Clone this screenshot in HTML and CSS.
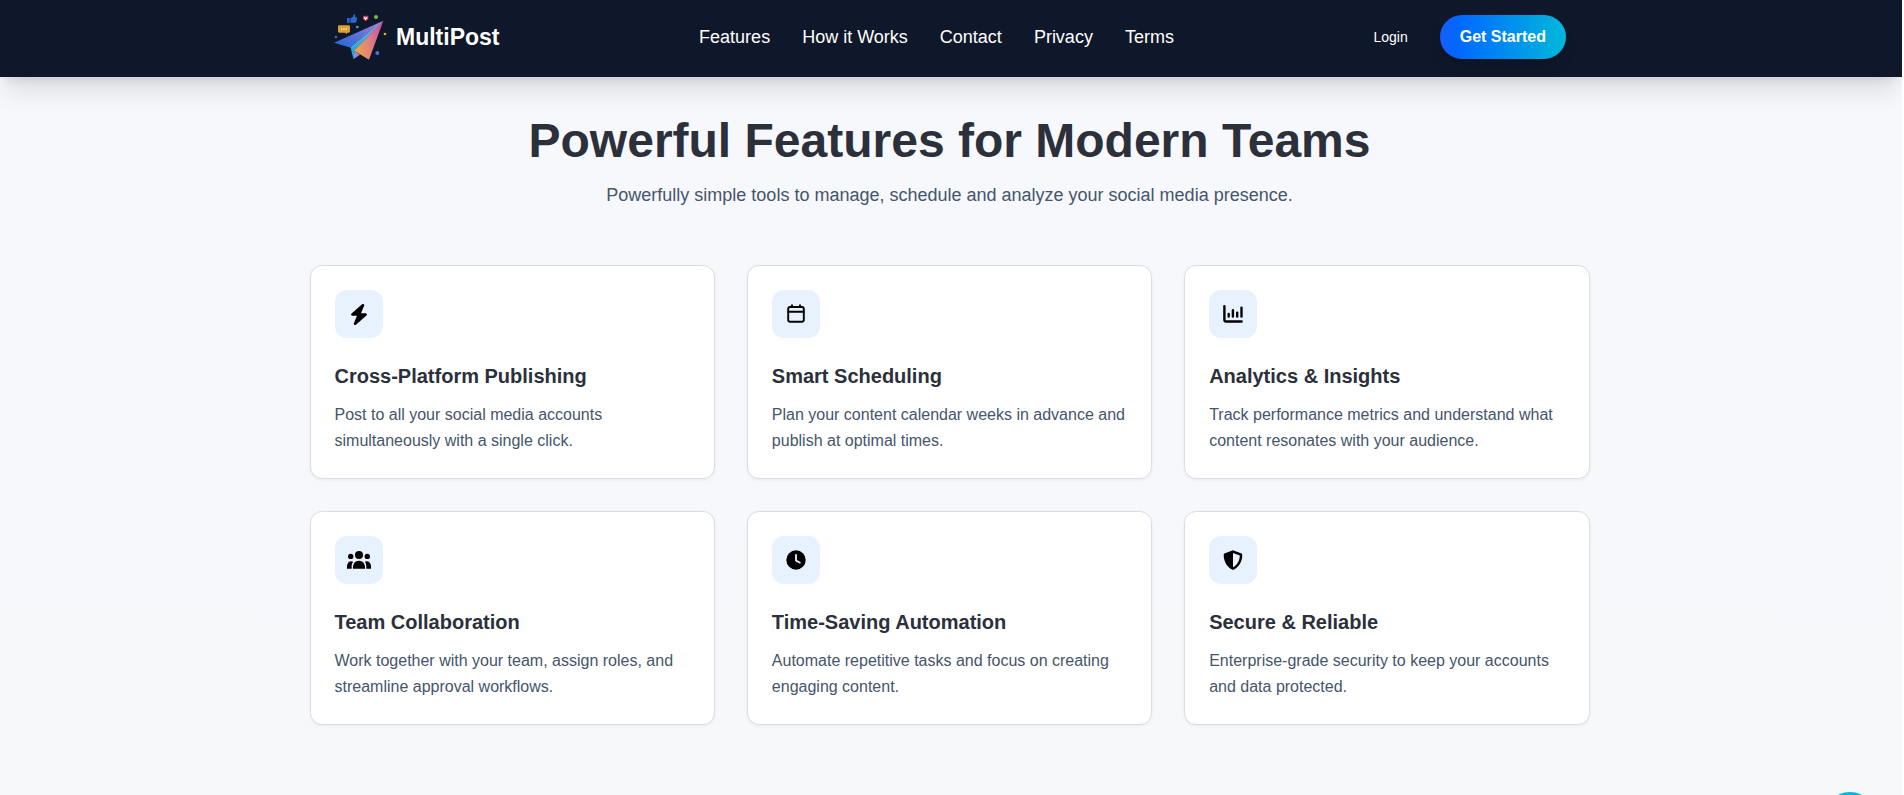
FILE: index.html
```html
<!doctype html>
<html lang="en">
<head>
<meta charset="utf-8">
<meta name="viewport" content="width=device-width, initial-scale=1">
<title>MultiPost</title>
<link rel="stylesheet" href="styles.css">
</head>
<body>

<header class="header">
	<div class="header-inner">
		<a class="brand" href="#">
			<svg class="logo" viewBox="45 36 162 150" aria-hidden="true">
				<defs>
					<linearGradient id="wing" x1="0" y1="1" x2="1" y2="0">
						<stop offset="0" stop-color="#2563d9"/>
						<stop offset=".5" stop-color="#5b74d6"/>
						<stop offset="1" stop-color="#b57fd0"/>
					</linearGradient>
					<linearGradient id="fold" x1="0" y1="1" x2="1" y2="0">
						<stop offset="0" stop-color="#1ea0cf"/>
						<stop offset=".5" stop-color="#3fb0d8"/>
						<stop offset="1" stop-color="#a87fd6"/>
					</linearGradient>
					<linearGradient id="side" x1="0" y1=".6" x2="1" y2=".4">
						<stop offset="0" stop-color="#f2a541"/>
						<stop offset=".5" stop-color="#e0807f"/>
						<stop offset="1" stop-color="#c94fa8"/>
					</linearGradient>
				</defs>
				<path fill="#9a86d8" d="M106 152L103 178L123 164Z"/>
				<path fill="url(#fold)" d="M193 62L95 143L103 178L107 153Z"/>
				<path fill="url(#wing)" d="M45 128L193 62L95 143Z"/>
				<path stroke="#7fd0ea" stroke-width="2" d="M97 143L186 69"/>
				<path fill="url(#side)" d="M193 62L150 179L106 152Z"/>
				<path fill="#2f66cf" d="M84 54h8v14h-8zM94 55l7-4 4-9q5 1 3 10h5q2 1 1 5l-2 9q-1 2-4 2H94z"/>
				<path fill="#d8375f" d="M135 47h10q3 0 3 3v5q0 4-8 9q-8-5-8-9v-5q0-3 3-3z"/>
				<path fill="#fff" d="M140 60l-5-5q-1-4 2-4l3 2 3-2q3 0 2 4z"/>
				<path fill="#dba032" d="M60 76h29q4 0 4 4v14q0 4-4 4h-5v5l-6-5H61q-4 0-4-4V80q0-4 3-4z"/>
				<g fill="#fff">
					<circle cx="68" cy="87" r="2"/><circle cx="75" cy="87" r="2"/><circle cx="82" cy="87" r="2"/>
				</g>
				<circle fill="#6fbf4b" cx="171" cy="51" r="6"/>
				<circle fill="#2cb1c4" cx="115" cy="81" r="4"/>
				<circle fill="#4a62c8" cx="51" cy="111" r="4"/>
				<circle fill="#e0b030" cx="198" cy="102" r="4"/>
				<circle fill="#4a6fd8" cx="175" cy="159" r="6"/>
			</svg>
			<span>MultiPost</span>
		</a>
		<nav class="nav">
			<a href="#features">Features</a>
			<a href="#how">How it Works</a>
			<a href="#contact">Contact</a>
			<a href="#privacy">Privacy</a>
			<a href="#terms">Terms</a>
		</nav>
		<div class="actions">
			<a class="login" href="#login">Login</a>
			<button class="btn-start" type="button">Get Started</button>
		</div>
	</div>
</header>

<main class="features" id="features">
	<div class="heading">
		<h1>Powerful Features for Modern Teams</h1>
		<p>Powerfully simple tools to manage, schedule and analyze your social media presence.</p>
	</div>

	<div class="grid">
		<div class="card">
			<div class="icon">
				<svg class="bolt" viewBox="0 0 448 512" aria-hidden="true"><path d="M349.4 44.6c5.9-13.7 1.5-29.7-10.6-38.5s-28.6-8-39.9 1.8l-256 224c-10 8.8-13.6 22.9-8.9 35.3S50.7 288 64 288H175.5L98.6 467.4c-5.9 13.7-1.5 29.7 10.6 38.5s28.6 8 39.9-1.8l256-224c10-8.8 13.6-22.9 8.9-35.3s-16.6-20.7-30-20.7H272.5L349.4 44.6z"/></svg>
			</div>
			<h2>Cross-Platform Publishing</h2>
			<p>Post to all your social media accounts simultaneously with a single click.</p>
		</div>

		<div class="card">
			<div class="icon">
				<svg class="line" viewBox="0 0 24 24" stroke-width="1.9" aria-hidden="true"><rect x="4.2" y="5" width="15.6" height="14.8" rx="2"/><path d="M4.2 9.7h15.6M8 3.2V5M16 3.2V5"/></svg>
			</div>
			<h2>Smart Scheduling</h2>
			<p>Plan your content calendar weeks in advance and publish at optimal times.</p>
		</div>

		<div class="card">
			<div class="icon">
				<svg class="line" viewBox="0 0 24 24" stroke-width="2.4" aria-hidden="true"><path d="M3.4 4.1v14.2q0 1.2 1.2 1.2h16M7.7 12v2.6M11.9 8.3v6.3M16.2 10.6v4M20.5 5.6v9"/></svg>
			</div>
			<h2>Analytics &amp; Insights</h2>
			<p>Track performance metrics and understand what content resonates with your audience.</p>
		</div>

		<div class="card">
			<div class="icon">
				<svg viewBox="0 0 24 24" aria-hidden="true"><circle cx="12" cy="7" r="4"/><circle cx="3.7" cy="8.4" r="2.7"/><circle cx="20.3" cy="8.4" r="2.7"/><path d="M6 20.8v-1.6c0-3.6 2.4-6.4 6-6.4s6 2.8 6 6.4v1.6zM0 20.8v-2.6c0-2.8 1.8-4.9 4.4-4.9q1 0 1.8.4c-1.4 1.6-1.7 3.6-1.5 7.1zM24 20.8v-2.6c0-2.8-1.8-4.9-4.4-4.9q-1 0-1.8.4c1.4 1.6 1.7 3.6 1.5 7.1z"/></svg>
			</div>
			<h2>Team Collaboration</h2>
			<p>Work together with your team, assign roles, and streamline approval workflows.</p>
		</div>

		<div class="card">
			<div class="icon">
				<svg viewBox="0 0 24 24" aria-hidden="true"><circle cx="12" cy="12" r="9.7"/><path class="hands" d="M12 6.2v6.2l4.5 2.7"/></svg>
			</div>
			<h2>Time-Saving Automation</h2>
			<p>Automate repetitive tasks and focus on creating engaging content.</p>
		</div>

		<div class="card">
			<div class="icon">
				<svg viewBox="0 0 24 24" aria-hidden="true"><path fill-rule="evenodd" d="M12 2.2L20 5.2C20.9 5.6 21.3 6.2 21.3 7C21.2 13.5 18 19 13 21.5Q12 22 11 21.5C6 19 2.8 13.5 2.7 7C2.7 6.2 3.1 5.6 4 5.2ZM12 4.9V19.3C16.2 17 18.7 12.8 18.8 7.4Z"/></svg>
			</div>
			<h2>Secure &amp; Reliable</h2>
			<p>Enterprise-grade security to keep your accounts and data protected.</p>
		</div>
	</div>
</main>

<button class="fab" type="button" aria-label="Scroll to top"></button>

</body>
</html>
```
FILE: styles.css
```css
* {box-sizing:border-box; margin:0; padding:0; }
html {height:100%; background-color:#fff; }
body {min-height:100%; margin-right:2px; background-image:linear-gradient(#f7f8fd,#f6f8fa); font-family:"Liberation Sans",Arial,sans-serif; overflow:hidden; }
a {color:inherit; text-decoration:none; }

/* header */
.header {position:relative; padding-right:2px; background-color:#0f172a; color:#fff; box-shadow:0 20px 25px -5px rgba(0,0,0,.1), 0 8px 10px -6px rgba(0,0,0,.1); }
.header-inner {display:flex; align-items:center; justify-content:space-between; max-width:1280px; margin:0 auto; padding:12px 24px 15px; }
.brand {display:flex; align-items:center; gap:8px; font-size:23px; font-weight:bold; }
.logo {width:54px; height:50px; }
.nav {display:flex; gap:32px; font-size:18px; }
.actions {display:flex; align-items:center; gap:32px; }
.login {font-size:14px; }
.btn-start {height:44px; padding:0 20px; border:0; border-radius:22px; background-image:linear-gradient(to right,#155dfc,#0069ff 15%,#00b8db); box-shadow:0 10px 15px -3px rgba(0,0,0,.1), 0 4px 6px -4px rgba(0,0,0,.1); color:#fff; font:bold 16px "Liberation Sans",Arial,sans-serif; cursor:pointer; }

/* features */
.features {padding:40px 27px 70px 24px; }
.heading {margin-bottom:56px; text-align:center; }
.heading h1 {margin-bottom:16px; color:#2b303b; font-size:48px; line-height:48px; }
.heading p {color:#45556c; font-size:18px; line-height:28px; }
.grid {display:grid; grid-template-columns:repeat(3,1fr); gap:32px; max-width:1280px; margin:0 auto; }
.card {padding:24px; border:1px solid #dadde6; border-radius:12px; background-color:#fff; box-shadow:0 1px 3px rgba(0,0,0,.06); }
.card h2 {margin-bottom:12px; color:#2b303b; font-size:20px; line-height:28px; }
.card p {color:#45556c; font-size:16px; line-height:26px; }
.icon {display:flex; align-items:center; justify-content:center; width:48px; height:48px; margin-bottom:24px; border-radius:12px; background-color:#e8f2ff; }
.icon svg {width:24px; height:24px; }
.icon .bolt {height:21px; }
.line {fill:none; stroke:#000; stroke-linecap:round; stroke-linejoin:round; }
.hands {fill:none; stroke:#e8f2ff; stroke-width:1.8; }

/* round button, only its top edge is in view */
.fab {position:fixed; right:26px; bottom:-53px; width:56px; height:56px; border:0; border-radius:50%; background-color:#00b8db; cursor:pointer; }
```
